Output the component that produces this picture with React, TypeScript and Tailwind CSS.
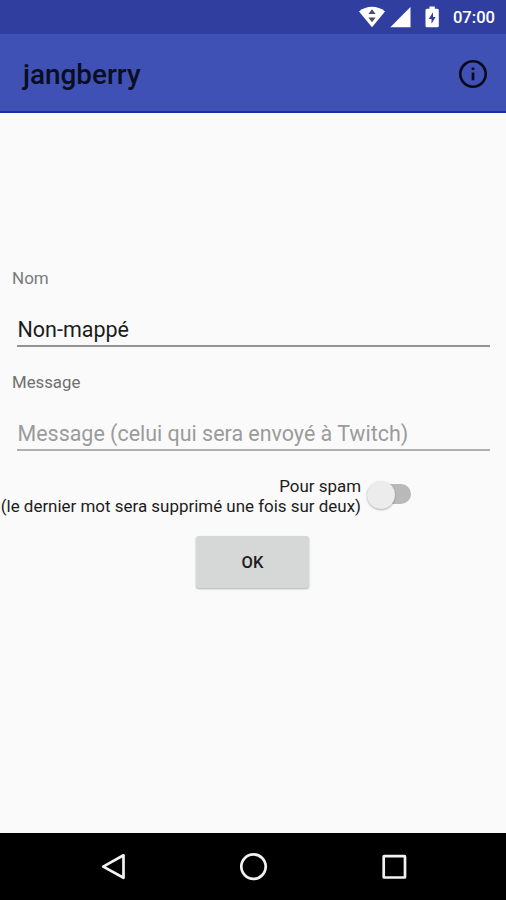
import { useState, type FormEvent } from 'react'

function StatusBar() {
  return (
    <div className="flex h-[34px] shrink-0 items-center justify-end bg-[#303f9f] pr-[11px] text-white">
      <svg className="h-[34px] w-[94px]" viewBox="352 0 94 34" fill="currentColor">
        <path d="M359 11.4C366.5 5.2 377.500 5.200 385 11.400L372 27.300Z" />
        <path d="M372 9.200L375.600 14H368.400ZM372 22.300L368.400 17.500H375.600Z" fill="#4e4e5c" />
        <path d="M410.500 7V27.300H390.300Z" />
        <path d="M429.500 6.600H434.800V8.800H437.300Q438.800 8.800 438.800 10.300V25.800Q438.800 27.300 437.300 27.300H427Q425.500 27.300 425.500 25.800V10.300Q425.500 8.800 427 8.800H429.500Z" />
        <path d="M433 12.300L428.700 19H431.500V23.700L435.600 16.900H433Z" fill="#303f9f" />
      </svg>
      <span className="ml-[7px] pt-[3px] text-[16.600px] leading-none font-medium">07:00</span>
    </div>
  )
}

function AppBar() {
  return (
    <header className="flex h-[79px] shrink-0 items-center justify-between border-b-2 border-[#1a31a4] bg-[#3f51b5] pr-[18px] pl-[23px]">
      <h1 className="pt-1 text-[27.900px] leading-8 font-medium text-[#0b0d20]">jangberry</h1>
      <button type="button" aria-label="Informations" className="pt-0.5 text-[#080a18]">
        <svg className="block size-[30px]" viewBox="0 0 30 30" fill="none">
          <circle cx="15" cy="15" r="12.700" stroke="currentColor" strokeWidth="2.600" />
          <path d="M15 13.600V21.300M15 8.400V11" stroke="currentColor" strokeWidth="2.700" />
        </svg>
      </button>
    </header>
  )
}

function NavigationBar() {
  return (
    <nav className="flex h-[67px] shrink-0 items-center bg-black text-[#f2f2f2]">
      <svg className="h-[67px] w-full" viewBox="0 0 506 67" fill="none" stroke="currentColor" strokeWidth="2.700">
        <path d="M123.500 22.300V44.800L103.200 33.600Z" strokeLinejoin="round" />
        <circle cx="253.500" cy="33.600" r="12.200" />
        <rect x="383.700" y="23.200" width="21.300" height="21.300" rx="0.500" />
      </svg>
    </nav>
  )
}

export default function App() {
  const [name, setName] = useState('Non-mappé')
  const [message, setMessage] = useState('')
  const [spam, setSpam] = useState(false)

  function handleSubmit(event: FormEvent<HTMLFormElement>) {
    event.preventDefault()
  }

  return (
    <div className="flex h-[900px] w-[506px] flex-col overflow-hidden bg-[#fafafa] font-['Roboto',sans-serif]">
      <StatusBar />
      <AppBar />

      <form className="flex flex-1 flex-col pt-[155px]" onSubmit={handleSubmit}>
        <label className="block">
          <span className="block pl-3 text-[17px] leading-5 text-[#7b7b7b]">Nom</span>
          <input
            className="mr-4 ml-[17px] block h-[59px] w-[473px] border-b-2 border-[#929492] pt-[25px] pb-0 pl-[0.500px] text-[21.500px] leading-8 text-[#1c1c1c] outline-none"
            value={name}
            onChange={(event) => setName(event.target.value)}
          />
        </label>

        <label className="mt-[25px] block">
          <span className="block pl-3 text-[16.800px] leading-5 text-[#6f6f6f]">Message</span>
          <input
            className="mr-4 ml-[17px] block h-[59px] w-[473px] border-b-2 border-[#b0b0b0] pt-[25px] pb-0 pl-[0.500px] text-[21.450px] leading-8 text-[#1c1c1c] outline-none placeholder:text-[#9b9b9b]"
            placeholder="Message (celui qui sera envoyé à Twitch)"
            value={message}
            onChange={(event) => setMessage(event.target.value)}
          />
        </label>

        <div className="mt-[25px] flex h-10 items-start">
          <p className="w-[361px] text-right text-[16.950px] leading-5 whitespace-nowrap text-[#1c1c1c]">
            Pour spam
            <br />
            (le dernier mot sera supprimé une fois sur deux)
          </p>
          <button
            type="button"
            role="switch"
            aria-checked={spam}
            aria-label="Pour spam"
            className="mt-1 ml-[6px] flex h-7 w-[44px] items-center"
            onClick={() => setSpam(!spam)}
          >
            <span className="flex h-5 w-[44px] items-center rounded-full bg-[#b9b9b9]">
              <span
                className={`-mt-[3px] -mb-[5px] size-7 shrink-0 rounded-full bg-[#ececec] shadow-[0_1px_2px_rgba(0,0,0,0.3)] ${spam ? 'ml-4' : ''}`}
              />
            </span>
          </button>
        </div>

        <button
          type="submit"
          className="mt-[20px] ml-[196px] h-[52px] w-[113px] rounded-[3px] bg-[#d6d7d7] pt-0.5 text-[16.500px] font-medium text-[#1c1c1c] shadow-[0_1px_2px_rgba(0,0,0,0.3)]"
        >
          OK
        </button>
      </form>

      <NavigationBar />
    </div>
  )
}
